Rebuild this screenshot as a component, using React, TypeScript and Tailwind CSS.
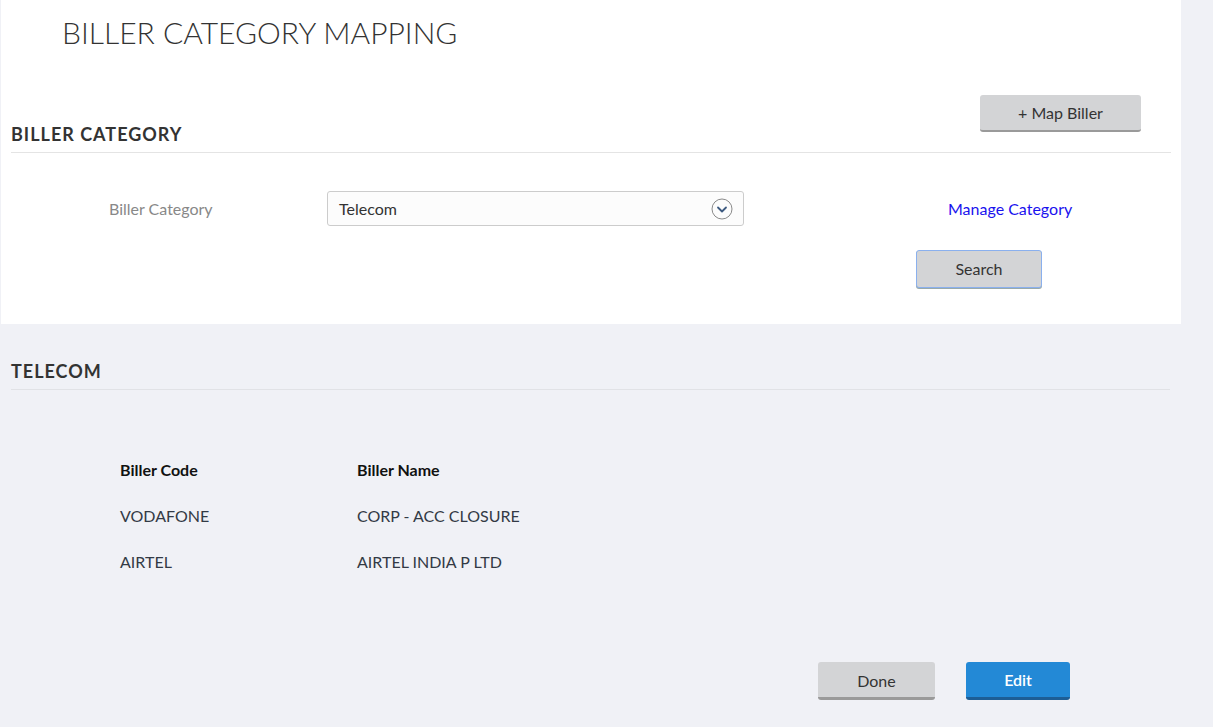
export default function App() {
  const rows = [
    { code: "VODAFONE", name: "CORP - ACC CLOSURE" },
    { code: "AIRTEL", name: "AIRTEL INDIA P LTD" },
  ];

  return (
    <div className="min-h-screen w-full bg-[#f0f1f6] pl-px font-['Lato',sans-serif] text-[#333]">
      <div className="h-[324px] w-[1180px] bg-white">
        <h1 className="pl-[61px] pt-[14px] text-[30px] leading-[36px] font-light text-[#333]">
          BILLER CATEGORY MAPPING
        </h1>

        <div className="mx-[10px] mt-[45px] flex items-start justify-between border-b border-[#e4e4e4]">
          <h2 className="pt-[28px] pb-[7px] text-[18px] leading-[22px] font-bold tracking-[1px] text-[#333]">
            BILLER CATEGORY
          </h2>
          <button className="mr-[30px] h-[37px] w-[161px] rounded-[3px] border-b-2 border-[#9a9a9a] bg-[#d3d4d6] pt-[1px] text-[16px] text-[#333]">
            + Map Biller
          </button>
        </div>

        <div className="mt-[38px] flex h-[35px] items-center">
          <label className="w-[326px] pl-[108px] text-[16px] text-[#888]">Biller Category</label>
          <div className="flex h-[35px] w-[417px] items-center justify-between rounded-[3px] border border-[#ccc] bg-[#fcfcfc] pr-[10px] pl-[11px]">
            <span className="text-[16px] text-[#333]">Telecom</span>
            <svg width="22" height="22" viewBox="0 0 22 22">
              <circle cx="11" cy="11" r="10" fill="none" stroke="#8a8a8a" strokeWidth="1" />
              <path d="M7 9.5 L11 13.5 L15 9.5" fill="none" stroke="#3d5a80" strokeWidth="1.8" strokeLinecap="round" strokeLinejoin="round" />
            </svg>
          </div>
          <a className="ml-[204px] text-[16px] text-[#1a12ee]">Manage Category</a>
        </div>

        <button className="mt-[24px] ml-[915px] h-[38px] w-[126px] rounded-[3px] border border-[#8ab0ee] bg-[#d3d4d6] text-[16px] text-[#333] shadow-[0_1px_0_#9aa]">
          Search
        </button>
      </div>

      <div className="mx-[10px] mt-[36px] w-[1159px] border-b border-[#e1e2e6]">
        <h2 className="pb-[7px] text-[18px] leading-[22px] font-bold tracking-[1px] text-[#333]">TELECOM</h2>
      </div>

      <div className="mt-[57px] pl-[119px] text-[16px]">
        <div className="flex h-[46px] items-center font-bold text-[#111]">
          <div className="w-[237px]">Biller Code</div>
          <div>Biller Name</div>
        </div>
        {rows.map((r) => (
          <div key={r.code} className="flex h-[46px] items-center text-[#333a45]">
            <div className="w-[237px]">{r.code}</div>
            <div>{r.name}</div>
          </div>
        ))}
      </div>

      <div className="mt-[77px] flex gap-[31px] pl-[817px]">
        <button className="h-[38px] w-[117px] rounded-[3px] border-b-[3px] border-[#9a9a9a] bg-[#d3d4d6] pt-[2px] text-[16px] text-[#333]">
          Done
        </button>
        <button className="h-[38px] w-[104px] rounded-[3px] border-b-[3px] border-[#1d5e96] bg-[#2389d6] pt-[1px] text-[16px] font-semibold text-white">
          Edit
        </button>
      </div>
    </div>
  );
}
